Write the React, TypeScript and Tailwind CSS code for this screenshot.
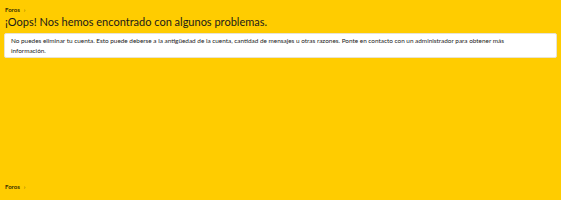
export default function App() {
  return (
    <div
      className="w-[561px] h-[200px] bg-[#ffcc00] flex flex-col px-[4px] text-[#141414]"
      style={{ fontFamily: 'Lato, "Noto Sans", sans-serif' }}
    >
      <div className="flex items-center gap-[4px] pt-[5px] h-[13px] text-[6px] font-bold text-[#3a3000]">
        <span className="pl-[1px]">Foros</span>
        <span className="text-[#7a6400] font-normal">›</span>
      </div>
      <h1 className="mt-[2px] pl-[1px] text-[11px] leading-[14px] text-[#1a1a1a]">
        ¡Oops! Nos hemos encontrado con algunos problemas.
      </h1>
      <div className="mt-[4px] bg-white border border-[#e8e3d2] rounded-[2px] pl-[6px] pr-[36px] py-[2px] text-[6.4px] leading-[9.5px] text-[#222]">
        No puedes eliminar tu cuenta. Esto puede deberse a la antigüedad de la cuenta, cantidad de mensajes u otras razones. Ponte en contacto con un administrador para obtener más información.
      </div>
      <div className="mt-auto mb-[9px] flex items-center gap-[4px] h-[10px] text-[6px] font-bold text-[#3a3000]">
        <span className="pl-[1px]">Foros</span>
        <span className="text-[#7a6400] font-normal">›</span>
      </div>
    </div>
  )
}
